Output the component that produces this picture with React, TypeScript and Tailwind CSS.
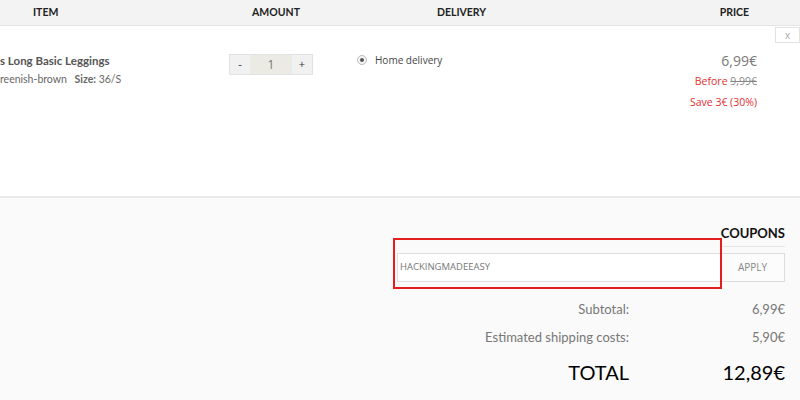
import React from "react";

const lato = "font-['Lato','Liberation_Sans',sans-serif]";
const open = "font-['Open_Sans','Liberation_Sans',sans-serif]";

function Header() {
  return (
    <div
      className={`grid grid-cols-[229px_94px_277px_200px] h-[26px] items-center bg-[#f3f3f3] border-b border-[#e4e4e4] text-[10.5px] font-bold text-[#222] ${lato}`}
    >
      <div className="pl-[33px]">ITEM</div>
      <div className="text-center">AMOUNT</div>
      <div className="text-center">DELIVERY</div>
      <div className="text-right pr-[51px]">PRICE</div>
    </div>
  );
}

function Quantity() {
  return (
    <div className={`flex h-[21px] w-[84px] border border-[#e2e2e2] text-[11px] text-[#333] ${open}`}>
      <button className="w-[20px] bg-[#f1f1f1] flex items-center justify-center">-</button>
      <div className="flex-1 bg-[#ebebe3] flex items-center justify-center text-[12px] text-[#777]">1</div>
      <button className="w-[20px] bg-[#f1f1f1] flex items-center justify-center">+</button>
    </div>
  );
}

function CartRow() {
  return (
    <div className="relative grid grid-cols-[229px_94px_277px_200px] h-[172px] border-b-2 border-[#ebebeb] bg-white">
      <div className={`pt-[26px] ${lato}`}>
        <div className="text-[11.5px] font-bold text-[#555] leading-[18px]">s Long Basic Leggings</div>
        <div className="text-[10.5px] text-[#666] leading-[16px] mt-[1px]">
          reenish-brown <span className="ml-[5px] font-bold">Size:</span> 36/S
        </div>
      </div>
      <div className="pt-[28px]">
        <Quantity />
      </div>
      <div className={`pt-[27px] pl-[34px] flex items-start gap-[8px] text-[10px] text-[#444] ${open}`}>
        <span className="mt-[2px] w-[10px] h-[10px] rounded-full border border-[#bbb] bg-[#f4f4f4] flex items-center justify-center">
          <span className="w-[4px] h-[4px] rounded-full bg-[#555]" />
        </span>
        <span className="leading-[14px]">Home delivery</span>
      </div>
      <div className={`pt-[24px] pr-[43px] text-right ${open}`}>
        <div className="text-[14px] text-[#777] leading-[22px]">6,99€</div>
        <div className="text-[10.5px] text-[#e53030] leading-[16px] mt-[1px]">
          Before <span className="text-[#888] line-through">9,99€</span>
        </div>
        <div className="text-[10.5px] text-[#e53030] leading-[16px] mt-[5px]">Save 3€ (30%)</div>
      </div>
      <button
        className={`absolute right-0 top-[1px] w-[25px] h-[16px] border border-[#e2e2e2] bg-white text-[10px] leading-none text-[#aaa] flex items-center justify-center ${open}`}
      >
        x
      </button>
    </div>
  );
}

function Summary() {
  const rows = [
    ["Subtotal:", "6,99€"],
    ["Estimated shipping costs:", "5,90€"],
  ];
  return (
    <div className="flex-1 bg-[#fafafa] pr-[15px] pt-[26px]">
      <div className="flex justify-end">
        <div className={`text-[13px] font-bold text-[#111] border-b border-[#e6e6e6] pb-[2px] ${lato}`}>COUPONS</div>
      </div>
      <div className="relative flex justify-end mt-[6px]">
        <div className={`flex h-[29px] w-[388px] ${open}`}>
          <div className="flex-1 bg-white border border-[#e0e0e0] flex items-center pl-[2px] text-[9.5px] text-[#777]">
            HACKINGMADEEASY
          </div>
          <button className="w-[64px] bg-[#fcfcfc] border border-l-0 border-[#dcdcdc] text-[10px] text-[#888]">APPLY</button>
        </div>
        <div className="absolute left-[393px] top-[-15px] w-[329px] h-[51px] border-2 border-[#e41e1e]" />
      </div>
      <div className={`mt-[13px] grid grid-cols-[1fr_156px] text-[13px] text-[#777] ${lato}`}>
        {rows.map(([label, value]) => (
          <React.Fragment key={label}>
            <div className="text-right leading-[28px]">{label}</div>
            <div className="text-right leading-[28px]">{value}</div>
          </React.Fragment>
        ))}
        <div className="text-right text-[20px] text-black leading-[30px] mt-[6px]">TOTAL</div>
        <div className="text-right text-[20px] text-black leading-[30px] mt-[6px]">12,89€</div>
      </div>
    </div>
  );
}

export default function App() {
  return (
    <div className="w-[800px] h-[400px] overflow-hidden flex flex-col bg-white">
      <Header />
      <CartRow />
      <Summary />
    </div>
  );
}
